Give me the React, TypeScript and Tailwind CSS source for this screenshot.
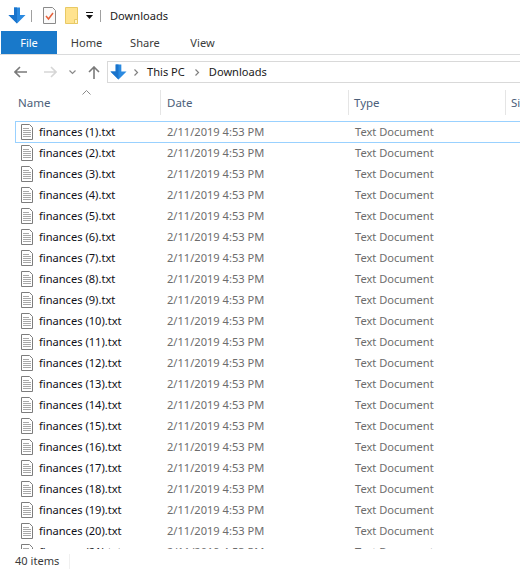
import React from "react";

function DownArrow({ size = 18 }: { size?: number }) {
  return (
    <svg width={size} height={size} viewBox="0 0 18 18" className="block">
      <path d="M6 0.5h6V8h5.5L9 16.5 0.5 8H6z" fill="#2b8ae0" />
      <path d="M6 0.5h3V16.5L0.5 8H6z" fill="#1a74cc" />
    </svg>
  );
}

function TxtIcon() {
  return (
    <svg width="12" height="16" viewBox="0 0 12 16" className="block">
      <path d="M0.5 0.5h8l3 3v12h-11z" fill="#fff" stroke="#7d7d7d" />
      <path d="M2 4.5h6M2 6.5h8M2 8.5h8M2 10.5h8M2 12.5h8" stroke="#a8a8a8" />
    </svg>
  );
}

function Row({ n, selected }: { n: number; selected?: boolean }) {
  return (
    <div className="relative flex items-center h-[21px] shrink-0 ml-[16px] -mr-[2px]">
      {selected && (
        <div className="absolute -left-px top-0 right-0 h-[22px] border border-[#99d1ff]" />
      )}
      <div className="w-[23px] pl-[5px] shrink-0">
        <TxtIcon />
      </div>
      <div className="w-[128px] shrink-0 pt-px text-[#101018]">finances ({n}).txt</div>
      <div className="w-[188px] shrink-0 pt-px text-[#6d6d6d]">2/11/2019 4:53 PM</div>
      <div className="pt-px text-[#6d6d6d]">Text Document</div>
    </div>
  );
}

export default function App() {
  const rows = Array.from({ length: 21 }, (_, i) => i + 1);
  return (
    <div className="w-[520px] h-[573px] bg-white flex flex-col overflow-hidden font-['Noto_Sans',sans-serif] text-[11.1px] text-[#1a1a1a]">
      {/* Title bar */}
      <div className="h-[31px] shrink-0 flex items-center pl-[8px]">
        <DownArrow />
        <div className="w-px h-[12px] bg-[#a0a0a0] ml-[5px]" />
        <div className="ml-[11px]">
          <svg width="13" height="17" viewBox="0 0 13 17" className="block">
            <path d="M0.5 0.5h9l3 3v13h-12z" fill="#fafafa" stroke="#8a8a8a" />
            <path d="M3 9l2.5 3L10 6" fill="none" stroke="#e5603a" strokeWidth="1.5" />
          </svg>
        </div>
        <div className="ml-[9px]">
          <svg width="13" height="17" viewBox="0 0 13 17" className="block">
            <path d="M0.5 0.5h12v16h-12z" fill="#ffe38e" stroke="#e8c964" />
            <path d="M9.5 12.5h3v4h-3z" fill="#fff4c8" stroke="#e8c964" />
          </svg>
        </div>
        <div className="ml-[8px]">
          <svg width="8" height="8" viewBox="0 0 8 8" className="block">
            <path d="M0 0.5h7" stroke="#111" />
            <path d="M0 3h7L3.5 7z" fill="#111" />
          </svg>
        </div>
        <div className="w-px h-[12px] bg-[#a0a0a0] ml-[6px]" />
        <div className="ml-[9px] pt-px text-[#1a1a1a]">Downloads</div>
      </div>
      {/* Ribbon tabs */}
      <div className="h-[24px] shrink-0 flex border-b border-[#dadbdc] pl-px">
        <div className="w-[56px] h-[23px] pt-px bg-[#1979ca] text-white flex items-center justify-center">File</div>
        <div className="w-[59px] pt-px flex items-center justify-center text-[#3b3b3b]">Home</div>
        <div className="w-[58px] pt-px flex items-center justify-center text-[#3b3b3b]">Share</div>
        <div className="w-[57px] pt-px flex items-center justify-center text-[#3b3b3b]">View</div>
      </div>
      {/* Nav row */}
      <div className="h-[34px] shrink-0 flex items-center pl-[14px]">
        <svg width="13" height="12" viewBox="0 0 13 12" className="block">
          <path d="M6 1L1 6l5 5M1 6h12" fill="none" stroke="#7a7a7a" strokeWidth="1.6" />
        </svg>
        <svg width="13" height="12" viewBox="0 0 13 12" className="block ml-[17px]">
          <path d="M7 1l5 5-5 5M12 6H0" fill="none" stroke="#d6d6d6" strokeWidth="1.6" />
        </svg>
        <svg width="7" height="5" viewBox="0 0 7 5" className="block ml-[12px]">
          <path d="M0.5 0.5L3.5 3.5l3-3" fill="none" stroke="#8a8a8a" strokeWidth="1.2" />
        </svg>
        <svg width="12" height="13" viewBox="0 0 12 13" className="block ml-[12px]">
          <path d="M1 6l5-5 5 5M6 1v12" fill="none" stroke="#7a7a7a" strokeWidth="1.6" />
        </svg>
        <div className="ml-[7px] flex-1 h-[22px] border border-r-0 border-[#d9d9d9] flex items-center pl-[2px] text-[#1a1a1a]">
          <DownArrow size={17} />
          <svg width="5" height="7" viewBox="0 0 5 7" className="block ml-[7px]">
            <path d="M0.5 0.5l3 3-3 3" fill="none" stroke="#808080" strokeWidth="1.2" />
          </svg>
          <span className="ml-[8px]">This PC</span>
          <svg width="5" height="7" viewBox="0 0 5 7" className="block ml-[10px]">
            <path d="M0.5 0.5l3 3-3 3" fill="none" stroke="#808080" strokeWidth="1.2" />
          </svg>
          <span className="ml-[9px]">Downloads</span>
        </div>
      </div>
      {/* Column header */}
      <div className="relative h-[32px] shrink-0 flex items-start pt-px text-[11.5px]">
        <svg width="9" height="5" viewBox="0 0 9 5" className="absolute left-[82px] top-[1px]">
          <path d="M0.5 4.5l4-4 4 4" fill="none" stroke="#8a8a8a" />
        </svg>
        <div className="w-[161px] shrink-0 h-[25px] pl-[18px] flex items-center border-r border-[#e5e5e5] text-[#4c607a]">Name</div>
        <div className="w-[188px] shrink-0 h-[25px] pl-[6px] flex items-center border-r border-[#e5e5e5] text-[#4c607a]">Date</div>
        <div className="w-[157px] shrink-0 h-[25px] pl-[5px] flex items-center border-r border-[#e5e5e5] text-[#4c607a]">Type</div>
        <div className="h-[25px] pl-[5px] flex items-center text-[#4c607a] whitespace-nowrap">Size</div>
      </div>
      {/* Rows */}
      <div className="flex-1 min-h-0 overflow-hidden flex flex-col">
        {rows.map((n) => (
          <Row key={n} n={n} selected={n === 1} />
        ))}
      </div>
      {/* Status bar */}
      <div className="h-[24px] shrink-0 flex items-center pl-[15px] text-[#3a3a3a]">
        <span className="w-[54px]">40 items</span>
        <div className="w-px h-[15px] bg-[#f0f0f0]" />
      </div>
    </div>
  );
}
